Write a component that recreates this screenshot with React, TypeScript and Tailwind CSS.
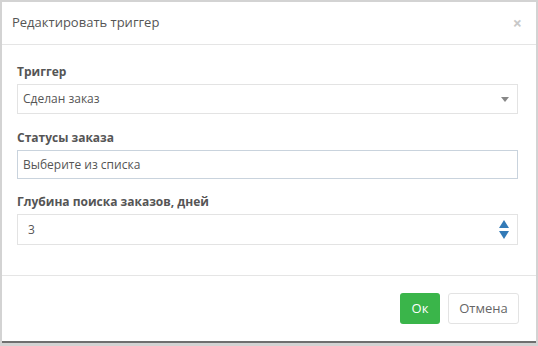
export default function App() {
  return (
    <div
      className="w-[538px] h-[346px] bg-[#d3d3d3] pt-[2px] pl-[2px]"
      style={{ fontFamily: '"Open Sans", "Liberation Sans", sans-serif' }}
    >
      <div className="w-[534px] h-[341px] bg-white flex flex-col border-b-2 border-[#6f6f6f]">
        <div className="h-[43px] flex items-center justify-between pl-[10px] pr-[14px] border-b border-[#e5e5e5]">
          <span className="text-[13px] text-[#555]">Редактировать триггер</span>
          <span className="text-[16px] leading-none text-[#c8c8c8] font-bold">×</span>
        </div>
        <div className="flex flex-col pl-[15px] pr-[18px] pt-[19px] h-[231px] border-b border-[#e5e5e5]">
          <div className="text-[12px] font-bold text-[#555] leading-[16px]">Триггер</div>
          <div className="mt-[4px] h-[30px] border border-[#e3e3e3] flex items-center justify-between pl-[5px] pr-[8px]">
            <span className="text-[12px] text-[#555]">Сделан заказ</span>
            <svg width="8" height="5" viewBox="0 0 8 5">
              <path d="M0 0 H8 L4 5 Z" fill="#888" />
            </svg>
          </div>
          <div className="mt-[16px] text-[12px] font-bold text-[#555] leading-[16px]">Статусы заказа</div>
          <div className="mt-[4px] h-[29px] border border-[#c9d3dd] flex items-center pl-[5px]">
            <span className="text-[12px] text-[#555]">Выберите из списка</span>
          </div>
          <div className="mt-[15px] text-[12px] font-bold text-[#555] leading-[16px]">Глубина поиска заказов, дней</div>
          <div className="mt-[4px] h-[31px] border border-[#e3e3e3] flex items-center justify-between pl-[10px] pr-[8px]">
            <span className="text-[12px] text-[#555]">3</span>
            <div className="flex flex-col gap-[3px]">
              <svg width="10" height="8" viewBox="0 0 10 8">
                <path d="M5 0 L10 8 H0 Z" fill="#337ab7" />
              </svg>
              <svg width="10" height="8" viewBox="0 0 10 8">
                <path d="M0 0 H10 L5 8 Z" fill="#337ab7" />
              </svg>
            </div>
          </div>
        </div>
        <div className="flex justify-end gap-[8px] pr-[17px] pt-[17px]">
          <button className="w-[40px] h-[31px] bg-[#3ab54a] rounded-[3px] text-white text-[13px]">Ок</button>
          <button className="w-[71px] h-[31px] bg-white border border-[#e3e3e3] rounded-[3px] text-[#666] text-[13px]">Отмена</button>
        </div>
      </div>
    </div>
  );
}
